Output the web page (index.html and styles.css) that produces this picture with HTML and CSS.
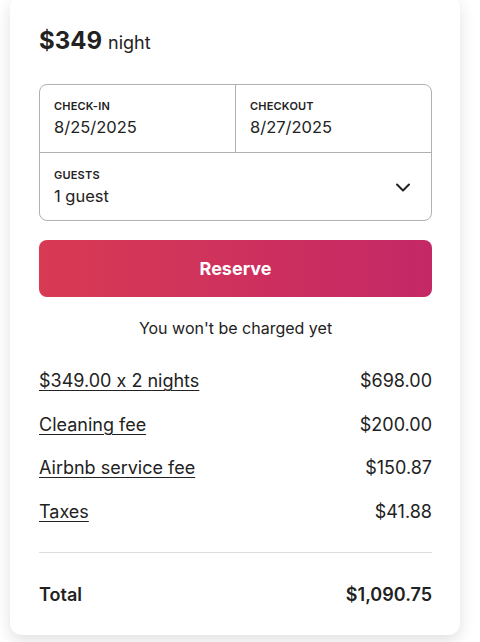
FILE: index.html
```html
<!DOCTYPE html>
<html lang="en">
<head>
<meta charset="utf-8">
<link rel="stylesheet" href="styles.css">
</head>
<body>
<div class="card">
  <div class="price"><span class="amount">$349</span> <span class="unit">night</span></div>
  <div class="picker">
    <div class="dates">
      <div class="field">
        <div class="label">CHECK-IN</div>
        <div class="value">8/25/2025</div>
      </div>
      <div class="field field-right">
        <div class="label">CHECKOUT</div>
        <div class="value">8/27/2025</div>
      </div>
    </div>
    <div class="field guests">
      <div>
        <div class="label">GUESTS</div>
        <div class="value">1 guest</div>
      </div>
      <svg class="chev" width="16" height="16" viewBox="0 0 32 32" fill="none" stroke="#222" stroke-width="4" stroke-linecap="round" stroke-linejoin="round"><path d="M4 11 L16 23 L28 11"/></svg>
    </div>
  </div>
  <button class="reserve">Reserve</button>
  <div class="note">You won't be charged yet</div>
  <div class="rows">
    <div class="row"><span class="link">$349.00 x 2 nights</span><span>$698.00</span></div>
    <div class="row"><span class="link">Cleaning fee</span><span>$200.00</span></div>
    <div class="row"><span class="link">Airbnb service fee</span><span>$150.87</span></div>
    <div class="row"><span class="link">Taxes</span><span>$41.88</span></div>
  </div>
  <div class="divider"></div>
  <div class="row total"><span>Total</span><span>$1,090.75</span></div>
</div>
</body>
</html>
```
FILE: styles.css
```css
* { box-sizing: border-box; }
html, body { margin: 0; padding: 0; background: #fff; }
body {
  font-family: Inter, "Noto Sans", "Liberation Sans", sans-serif;
  font-feature-settings: "calt" 0;
  color: #222;
  width: 480px;
  height: 642px;
  overflow: hidden;
}
.card {
  margin: -4px 0 0 10px;
  width: 450px;
  background: #fff;
  border-radius: 12px;
  box-shadow: 0 6px 16px rgba(0,0,0,0.12);
  padding: 31px 28px 28px 29px;
}
.price { line-height: 28px; display: flex; align-items: baseline; gap: 6px; }
.amount { font-size: 24px; font-weight: 700; }
.unit { font-size: 18px; }
.picker {
  margin-top: 27px;
  border: 1px solid #b0b0b0;
  border-radius: 8px;
}
.dates { display: flex; border-bottom: 1px solid #b0b0b0; }
.dates .field { flex: 1; }
.field-right { border-left: 1px solid #b0b0b0; }
.field { height: 67px; padding: 13px 12px 0 14px; }
.guests { height: 67px; display: flex; justify-content: space-between; align-items: center; padding-top: 0; padding-right: 20px; }
.label { font-size: 11px; font-weight: 600; line-height: 16px; letter-spacing: 0.2px; }
.value { font-size: 16.5px; line-height: 22px; margin-top: 2px; }
.guests .value { margin-top: 2px; }
.chev { display: block; }
.reserve {
  display: block;
  width: 100%;
  margin-top: 19px;
  height: 57px;
  border: 0;
  border-radius: 8px;
  background: linear-gradient(to right, #d83a53, #c42866);
  color: #fff;
  font-family: inherit;
  font-size: 18px;
  font-weight: 700;
}
.note { margin-top: 21px; text-align: center; font-size: 16px; line-height: 20px; }
.rows { margin-top: 31px; display: flex; flex-direction: column; gap: 19.5px; }
.row { display: flex; justify-content: space-between; font-size: 18px; line-height: 24px; }
.link { text-decoration: underline; text-underline-offset: 3px; text-decoration-thickness: 1px; }
.divider { margin-top: 28px; height: 1px; background: #dddddd; }
.total { margin-top: 30px; font-weight: 600; }
```
